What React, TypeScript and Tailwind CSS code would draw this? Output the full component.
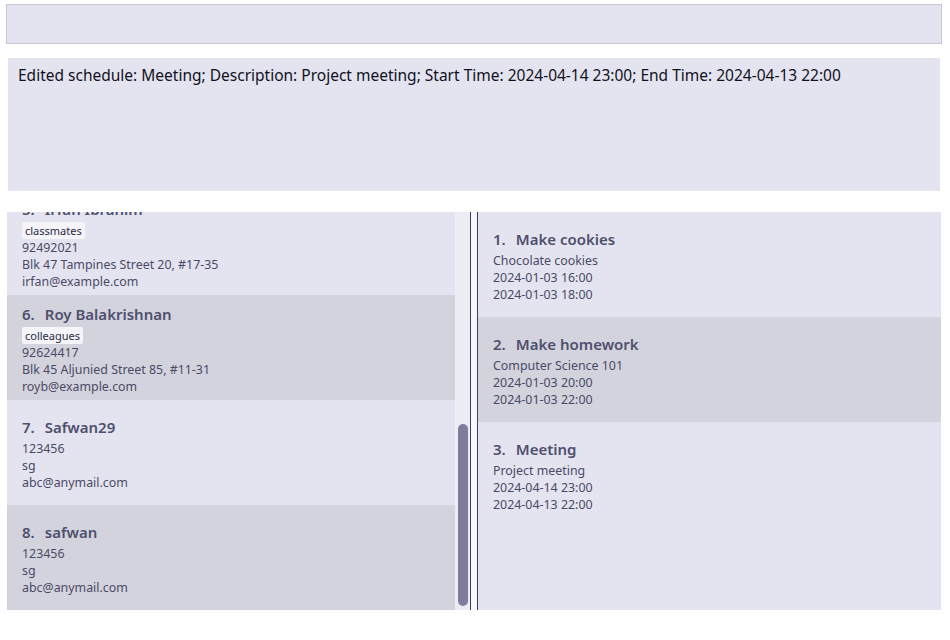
import React from "react";

type Person = { idx: number; name: string; tag?: string; phone: string; address: string; email: string };
type Sched = { idx: number; name: string; desc: string; start: string; end: string };

const people: Person[] = [
  { idx: 5, name: "Irfan Ibrahim", tag: "classmates", phone: "92492021", address: "Blk 47 Tampines Street 20, #17-35", email: "irfan@example.com" },
  { idx: 6, name: "Roy Balakrishnan", tag: "colleagues", phone: "92624417", address: "Blk 45 Aljunied Street 85, #11-31", email: "royb@example.com" },
  { idx: 7, name: "Safwan29", phone: "123456", address: "sg", email: "abc@anymail.com" },
  { idx: 8, name: "safwan", phone: "123456", address: "sg", email: "abc@anymail.com" },
];

const schedules: Sched[] = [
  { idx: 1, name: "Make cookies", desc: "Chocolate cookies", start: "2024-01-03 16:00", end: "2024-01-03 18:00" },
  { idx: 2, name: "Make homework", desc: "Computer Science 101", start: "2024-01-03 20:00", end: "2024-01-03 22:00" },
  { idx: 3, name: "Meeting", desc: "Project meeting", start: "2024-04-14 23:00", end: "2024-04-13 22:00" },
];

function Title({ idx, name }: { idx: number; name: string }) {
  return (
    <div className="text-[15px] leading-[20px] font-semibold text-[#4f4f6e] mb-[3px]">
      <span>{idx}.</span>
      <span className="ml-[10px]">{name}</span>
    </div>
  );
}

function Line({ children }: { children: React.ReactNode }) {
  return <div className="text-[12.4px] leading-[17px] text-[#4a4a66]">{children}</div>;
}

export default function App() {
  return (
    <div
      className="w-[950px] h-[640px] bg-white overflow-hidden"
      style={{ fontFamily: '"Noto Sans", "Open Sans", sans-serif' }}
    >
      <div className="ml-[6px] mt-[4px] w-[936px] h-[40px] border border-[#c9c9d6] bg-[#e4e4f0]" />
      <div className="ml-[8px] mt-[14px] w-[932px] h-[133px] bg-[#e4e4f0] pl-[10px] pt-[6px] text-[15.5px] leading-[22px] text-[#111122]">
        Edited schedule: Meeting; Description: Project meeting; Start Time: 2024-04-14 23:00; End Time: 2024-04-13 22:00
      </div>
      <div className="mt-[21px] ml-[7px] flex h-[398px]">
        <div className="w-[448px] h-full overflow-hidden bg-[#e4e4f0]">
          <div className="-mt-[22px]">
            {people.map((p) => (
              <div
                key={p.idx}
                className={`h-[105px] px-[15px] pt-[3px] flex flex-col justify-center ${p.idx % 2 === 0 ? "bg-[#d3d3dd]" : "bg-[#e4e4f0]"}`}
              >
                <Title idx={p.idx} name={p.name} />
                {p.tag && (
                  <div className="flex">
                    <span className="bg-[#f4f4f9] rounded-[2px] px-[3px] text-[11px] leading-[17px] text-[#2a2a44]">{p.tag}</span>
                  </div>
                )}
                <Line>{p.phone}</Line>
                <Line>{p.address}</Line>
                <Line>{p.email}</Line>
              </div>
            ))}
          </div>
        </div>
        <div className="w-[15px] h-full bg-[#ececf5] pt-[212px] pl-[3px]">
          <div className="w-[10px] h-[182px] rounded-[5px] bg-[#7e7e9c]" />
        </div>
        <div className="w-[1px] h-full bg-[#3c3c66]" />
        <div className="w-[6px] h-full bg-[#f8f8fc]" />
        <div className="w-[1px] h-full bg-[#3c3c66]" />
        <div className="w-[463px] h-full bg-[#e4e4f0]">
          {schedules.map((s) => (
            <div
              key={s.idx}
              className={`h-[105px] px-[15px] pt-[3px] flex flex-col justify-center ${s.idx % 2 === 0 ? "bg-[#d3d3dd]" : "bg-[#e4e4f0]"}`}
            >
              <Title idx={s.idx} name={s.name} />
              <Line>{s.desc}</Line>
              <Line>{s.start}</Line>
              <Line>{s.end}</Line>
            </div>
          ))}
        </div>
      </div>
    </div>
  );
}
